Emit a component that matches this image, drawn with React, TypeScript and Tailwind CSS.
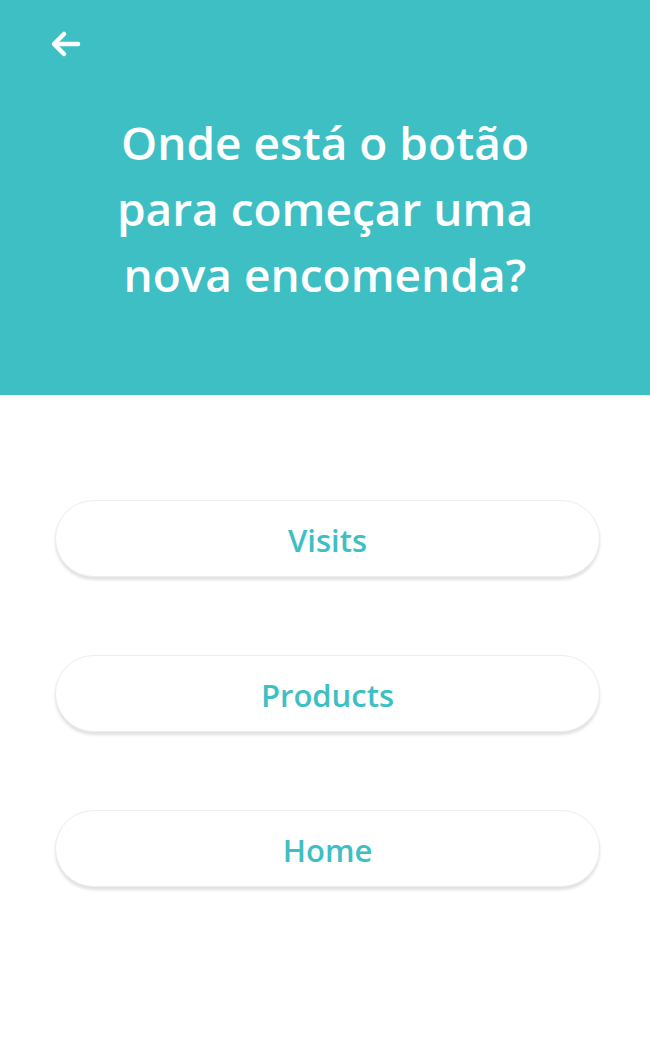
export default function App() {
  const options = ["Visits", "Products", "Home"];

  return (
    <div
      className="w-[650px] h-[1040px] bg-white flex flex-col"
      style={{ fontFamily: '"Open Sans", "Noto Sans", sans-serif' }}
    >
      {/* Header */}
      <header className="bg-[#3dbfc4] h-[395px] flex flex-col pt-[30px]">
        <button className="ml-[50px] w-[32px] h-[28px] flex items-center text-white">
          <svg
            width="32"
            height="28"
            viewBox="0 0 32 28"
            fill="none"
            stroke="currentColor"
            strokeWidth="4.5"
            strokeLinecap="round"
            strokeLinejoin="round"
          >
            <path d="M28 14H5" />
            <path d="M14 4L4 14l10 10" />
          </svg>
        </button>

        <h1 className="mt-[51px] mx-auto max-w-[470px] text-center text-white font-semibold text-[46px] leading-[66px]">
          Onde está o botão para começar uma nova encomenda?
        </h1>
      </header>

      {/* Answers */}
      <div className="flex flex-col gap-[78px] pl-[55px] pr-[50px] pt-[105px]">
        {options.map((label) => (
          <button
            key={label}
            className="h-[77px] w-full rounded-full bg-white border border-[#ededed] shadow-[0_3px_3px_rgba(0,0,0,0.12)] text-[#3dbfc4] font-semibold text-[31px] pt-[3px]"
          >
            {label}
          </button>
        ))}
      </div>
    </div>
  );
}
